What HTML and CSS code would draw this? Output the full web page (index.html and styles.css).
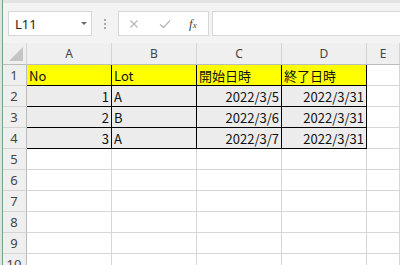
FILE: index.html
```html
<!DOCTYPE html>
<html>

<head>
  <title>Book1 - Excel</title>
  <link rel="stylesheet" href="styles.css">
</head>

<body>
  <div class="app">
    <div class="top-strip"></div>
    <div class="formula-bar">
      <div class="name-box">
        <span class="name-text">L11</span>
        <span class="name-arrow"></span>
      </div>
      <div class="grip">
        <span></span><span></span><span></span>
      </div>
      <div class="fx-box">
        <svg class="fx-icon" width="10" height="10" viewBox="0 0 10 10">
          <path d="M1.5 1.5 L8.5 8.5 M8.5 1.5 L1.5 8.5" stroke="#b8b8b8" stroke-width="1.2" fill="none"/>
        </svg>
        <svg class="fx-icon" width="12" height="10" viewBox="0 0 12 10">
          <path d="M1 5.5 L4.5 8.5 L11 1.5" stroke="#b8b8b8" stroke-width="1.3" fill="none"/>
        </svg>
        <span class="fx-text">f<sub>x</sub></span>
      </div>
      <div class="formula-input"></div>
    </div>

    <div class="sheet">
      <div class="corner"><span class="corner-tri"></span></div>
      <div class="col-head">A</div>
      <div class="col-head">B</div>
      <div class="col-head">C</div>
      <div class="col-head">D</div>
      <div class="col-head">E</div>

      <div class="row-head">1</div>
      <div class="cell title">No</div>
      <div class="cell title">Lot</div>
      <div class="cell title">開始日時</div>
      <div class="cell title">終了日時</div>
      <div class="cell"></div>

      <div class="row-head">2</div>
      <div class="cell data num">1</div>
      <div class="cell data">A</div>
      <div class="cell data num">2022/3/5</div>
      <div class="cell data num">2022/3/31</div>
      <div class="cell"></div>

      <div class="row-head">3</div>
      <div class="cell data num">2</div>
      <div class="cell data">B</div>
      <div class="cell data num">2022/3/6</div>
      <div class="cell data num">2022/3/31</div>
      <div class="cell"></div>

      <div class="row-head">4</div>
      <div class="cell data num">3</div>
      <div class="cell data">A</div>
      <div class="cell data num">2022/3/7</div>
      <div class="cell data num">2022/3/31</div>
      <div class="cell"></div>

      <div class="row-head">5</div>
      <div class="cell"></div><div class="cell"></div><div class="cell"></div><div class="cell"></div><div class="cell"></div>
      <div class="row-head">6</div>
      <div class="cell"></div><div class="cell"></div><div class="cell"></div><div class="cell"></div><div class="cell"></div>
      <div class="row-head">7</div>
      <div class="cell"></div><div class="cell"></div><div class="cell"></div><div class="cell"></div><div class="cell"></div>
      <div class="row-head">8</div>
      <div class="cell"></div><div class="cell"></div><div class="cell"></div><div class="cell"></div><div class="cell"></div>
      <div class="row-head">9</div>
      <div class="cell"></div><div class="cell"></div><div class="cell"></div><div class="cell"></div><div class="cell"></div>
      <div class="row-head">10</div>
      <div class="cell"></div><div class="cell"></div><div class="cell"></div><div class="cell"></div><div class="cell"></div>
    </div>
  </div>
</body>

</html>
```

FILE: styles.css
```css
body {
  margin: 0;
  padding: 0;
  background-color: #ffffff;
  font-family: "Noto Sans CJK JP", "Noto Sans", sans-serif;
  overflow: hidden;
}

.app {
  width: 400px;
  height: 265px;
  border-left: 2px solid #e2e2e2;
  box-sizing: border-box;
  position: relative;
  overflow: hidden;
  background-color: #f3f3f3;
}

.app::before {
  content: "";
  position: absolute;
  left: 0;
  top: 0;
  bottom: 0;
  width: 1px;
  background-color: #6fa57f;
  z-index: 2;
}

.top-strip {
  height: 3px;
  background-color: #e3e3e3;
}

.formula-bar {
  display: flex;
  align-items: center;
  height: 25px;
  margin-top: 8px;
  padding-left: 6px;
}

.name-box {
  width: 84px;
  height: 25px;
  box-sizing: border-box;
  background-color: #ffffff;
  border: 1px solid #d6d6d6;
  display: flex;
  align-items: center;
  justify-content: space-between;
  padding: 0 4px 0 6px;
}

.name-text {
  font-family: "Noto Sans", sans-serif;
  font-size: 13px;
  color: #222222;
}

.name-arrow {
  width: 0;
  height: 0;
  border-left: 3px solid transparent;
  border-right: 3px solid transparent;
  border-top: 3px solid #6a6a6a;
}

.grip {
  width: 26px;
  display: flex;
  flex-direction: column;
  align-items: center;
  gap: 2px;
}

.grip span {
  width: 2px;
  height: 2px;
  background-color: #a8a8a8;
}

.fx-box {
  width: 91px;
  height: 25px;
  box-sizing: border-box;
  background-color: #ffffff;
  border: 1px solid #d6d6d6;
  display: flex;
  align-items: center;
  padding-left: 10px;
}

.fx-icon {
  margin-right: 20px;
}

.fx-icon + .fx-icon {
  margin-right: 18px;
}

.fx-text {
  font-family: "Liberation Serif", serif;
  font-style: italic;
  font-size: 13px;
  color: #444444;
}

.fx-text sub {
  font-size: 9px;
  vertical-align: 0;
}

.formula-input {
  flex: 1;
  height: 25px;
  margin-left: 3px;
  box-sizing: border-box;
  background-color: #ffffff;
  border: 1px solid #d6d6d6;
  border-right: none;
}

.sheet {
  margin-top: 7px;
  display: grid;
  grid-template-columns: 25px 85px 85px 85px 85px 1fr;
  grid-template-rows: 22px repeat(10, 21px);
  background-color: #ffffff;
}

.corner,
.col-head,
.row-head {
  background-color: #efefef;
  color: #444444;
  font-family: "Noto Sans", sans-serif;
  font-size: 12px;
  box-sizing: border-box;
  display: flex;
  align-items: center;
  justify-content: center;
}

.corner {
  border-right: 1px solid #d4d4d4;
  border-bottom: 1px solid #bcbcbc;
  position: relative;
}

.corner-tri {
  position: absolute;
  right: 3px;
  bottom: 3px;
  width: 0;
  height: 0;
  border-left: 14px solid transparent;
  border-bottom: 14px solid #c4c4c4;
}

.col-head {
  border-right: 1px solid #d4d4d4;
  border-bottom: 1px solid #bcbcbc;
}

.row-head {
  border-right: 1px solid #bcbcbc;
  border-bottom: 1px solid #d4d4d4;
  font-size: 13px;
}

.cell {
  box-sizing: border-box;
  border-right: 1px solid #d6d6d6;
  border-bottom: 1px solid #d6d6d6;
  font-size: 13px;
  color: #111111;
  display: flex;
  align-items: center;
  padding: 0 2px;
  white-space: nowrap;
}

.cell.title {
  background-color: #ffff00;
  border-right-color: #000000;
  border-bottom-color: #000000;
}

.cell.data {
  background-color: #ececec;
  border-right-color: #000000;
  border-bottom-color: #000000;
}

.cell.num {
  justify-content: flex-end;
}
```
